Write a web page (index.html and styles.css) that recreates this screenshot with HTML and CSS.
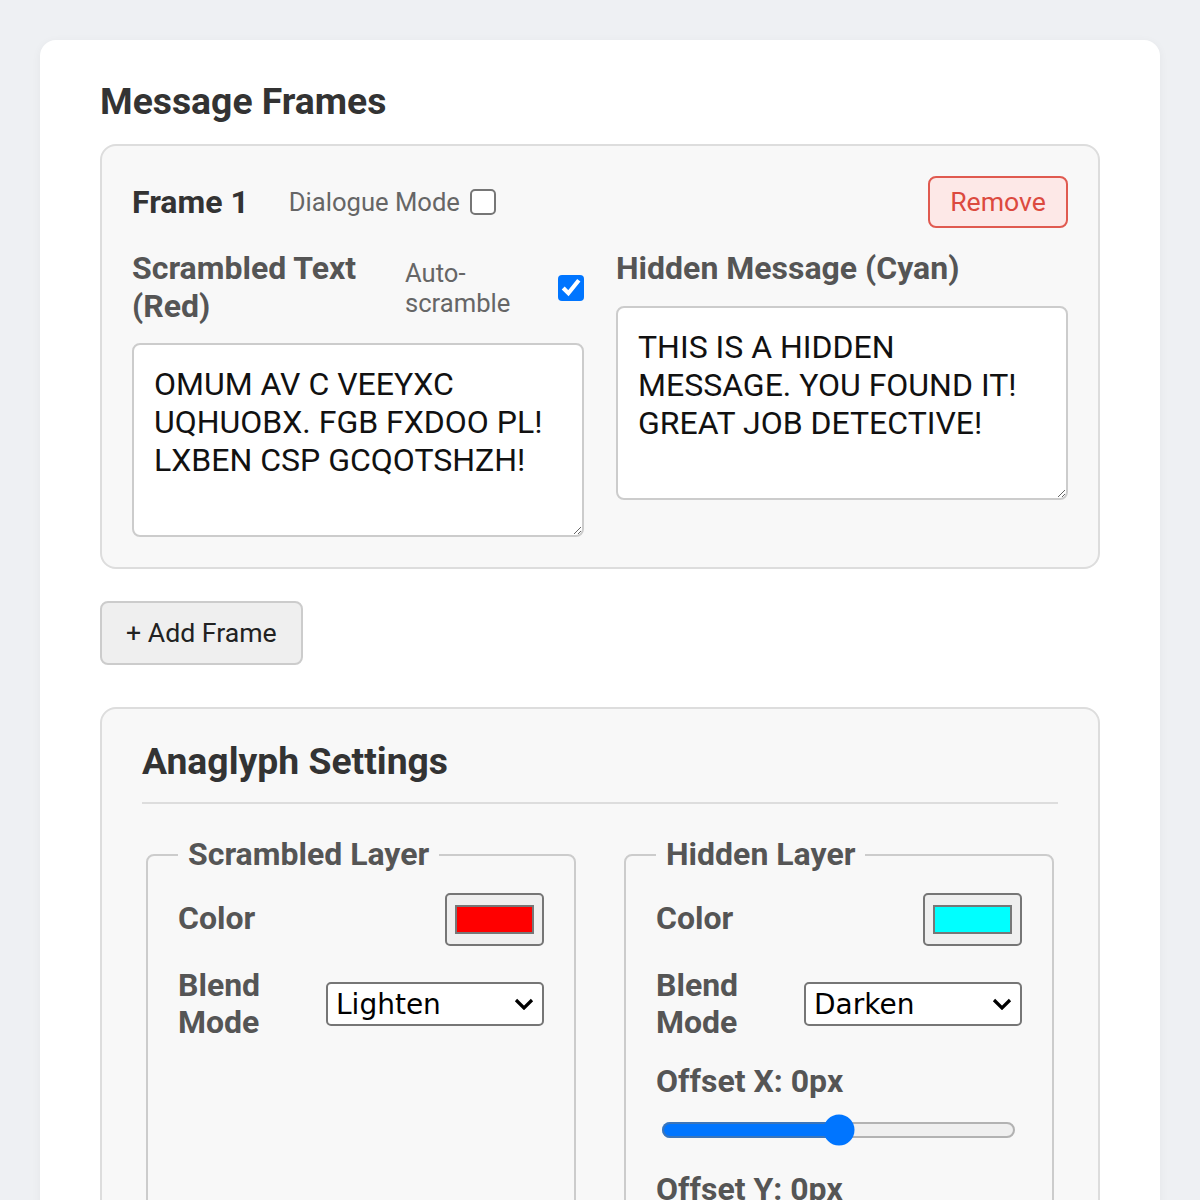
FILE: index.html
```html
<!DOCTYPE html>
<html lang="en">
<head>
<meta charset="utf-8">
<title>Message Frames</title>
<link rel="stylesheet" href="styles.css">
</head>
<body>
<div class="card">
  <h2 class="title">Message Frames</h2>
  <div class="frame">
    <div class="frame-head">
      <div class="frame-left">
        <h3 class="frame-name">Frame 1</h3>
        <label class="dialogue">Dialogue Mode <input type="checkbox" class="cb"></label>
      </div>
      <button class="remove">Remove</button>
    </div>
    <div class="cols">
      <div class="col">
        <div class="col-head">
          <label class="col-label">Scrambled Text (Red)</label>
          <label class="auto"><span class="auto-text">Auto-scramble</span><input type="checkbox" class="cb" checked></label>
        </div>
        <textarea class="msg">OMUM AV C VEEYXC UQHUOBX. FGB FXDOO PL! LXBEN CSP GCQOTSHZH!</textarea>
      </div>
      <div class="col">
        <div class="col-head">
          <label class="col-label wide">Hidden Message (Cyan)</label>
        </div>
        <textarea class="msg">THIS IS A HIDDEN MESSAGE. YOU FOUND IT! GREAT JOB DETECTIVE!</textarea>
      </div>
    </div>
  </div>
  <button class="add">+ Add Frame</button>
  <div class="settings">
    <h3 class="settings-title">Anaglyph Settings</h3>
    <div class="layers">
      <fieldset class="layer">
        <legend>Scrambled Layer</legend>
        <div class="layer-body">
          <div class="row"><label class="row-label">Color</label><input type="color" class="swatch" value="#ff0000"></div>
          <div class="row"><label class="row-label">Blend Mode</label><select class="blend"><option>Lighten</option><option>Darken</option><option>Multiply</option><option>Screen</option></select></div>
        </div>
      </fieldset>
      <fieldset class="layer">
        <legend>Hidden Layer</legend>
        <div class="layer-body">
          <div class="row"><label class="row-label">Color</label><input type="color" class="swatch" value="#00ffff"></div>
          <div class="row"><label class="row-label">Blend Mode</label><select class="blend"><option>Darken</option><option>Lighten</option><option>Multiply</option><option>Screen</option></select></div>
          <div class="offset">
            <label class="row-label">Offset X: 0px</label>
            <input type="range" class="range" min="-50" max="50" value="0">
          </div>
          <div class="offset">
            <label class="row-label">Offset Y: 0px</label>
            <input type="range" class="range" min="-50" max="50" value="0">
          </div>
        </div>
      </fieldset>
    </div>
  </div>
</div>
</body>
</html>
```
FILE: styles.css
```css
body {
  margin: 0;
  padding: 40px;
  background: #eef0f3;
  font-family: Roboto, "Liberation Sans", sans-serif;
}

.card {
  background: #ffffff;
  border-radius: 16px;
  padding: 39px 60px 60px;
  box-shadow: 0 2px 10px rgba(0, 0, 0, 0.05);
}

.title {
  margin: 0 0 21px;
  font-size: 37.3px;
  font-weight: 700;
  color: #333;
  line-height: normal;
}

.frame {
  background: #f8f8f8;
  border: 2px solid #dddddd;
  border-radius: 16px;
  padding: 30px;
}

.frame-head {
  display: flex;
  align-items: center;
  justify-content: space-between;
  margin-bottom: 22px;
}

.frame-left {
  display: flex;
  align-items: center;
  gap: 40px;
}

.frame-name {
  margin: 0;
  font-size: 32px;
  font-weight: 700;
  color: #333;
}

.dialogue {
  display: flex;
  align-items: center;
  gap: 10px;
  font-size: 25.6px;
  color: #666;
}

.cb {
  zoom: 2;
  margin: 0;
}

.remove {
  font-family: Roboto, sans-serif;
  font-size: 26.67px;
  line-height: 32px;
  color: #dc4a3f;
  background: #fde8e7;
  border: 2px solid #e05a50;
  border-radius: 8px;
  padding: 8px 20px;
}

.cols {
  display: grid;
  grid-template-columns: 1fr 1fr;
  gap: 32px;
  align-items: start;
}

.col-head {
  display: flex;
  align-items: center;
  justify-content: space-between;
  margin-bottom: 18px;
}

.col-label {
  width: 250px;
  font-size: 32px;
  font-weight: 700;
  color: #555;
  line-height: 37.5px;
}

.col-label.wide {
  width: auto;
}

.auto {
  display: flex;
  align-items: center;
  gap: 23px;
  font-size: 25.6px;
  line-height: 30px;
  color: #666;
}

.auto-text {
  width: 130px;
}

.msg {
  display: block;
  width: 100%;
  height: 194px;
  box-sizing: border-box;
  margin: 0;
  padding: 20px;
  border: 2px solid #cccccc;
  border-radius: 8px;
  background: #ffffff;
  font-family: Roboto, sans-serif;
  font-size: 32px;
  line-height: normal;
  color: #111;
}

.add {
  display: block;
  margin-top: 32px;
  font-family: Roboto, sans-serif;
  font-size: 26.67px;
  line-height: 32px;
  color: #222;
  background: #efefef;
  border: 2px solid #cccccc;
  border-radius: 8px;
  padding: 14px 24px;
}

.settings {
  margin-top: 42px;
  background: #f8f8f8;
  border: 2px solid #dddddd;
  border-radius: 16px;
  padding: 30px 40px 40px;
}

.settings-title {
  margin: 0;
  font-size: 37.3px;
  font-weight: 700;
  color: #333;
  line-height: normal;
  padding-bottom: 19px;
  border-bottom: 2px solid #dddddd;
}

.layers {
  display: grid;
  grid-template-columns: 1fr 1fr;
  gap: 40px;
  margin-top: 32px;
}

.layer {
  margin: 0 4px;
  min-width: 0;
  padding: 19px 30px 30px;
  border: 2px solid #cccccc;
  border-radius: 8px;
}

.layer legend {
  padding: 0 10px;
  font-size: 32px;
  font-weight: 700;
  color: #555;
  line-height: 37.5px;
}

.layer-body {
  display: flex;
  flex-direction: column;
  gap: 21px;
}

.row {
  display: flex;
  align-items: center;
  justify-content: space-between;
  gap: 16px;
}

.row-label {
  flex: 1;
  display: block;
  font-size: 32px;
  font-weight: 700;
  color: #555;
  line-height: 37.5px;
}

.swatch {
  zoom: 2;
  width: 49.5px;
  height: 26.5px;
  margin: 0;
  flex: none;
}

.blend {
  appearance: none;
  -webkit-appearance: none;
  flex: none;
  box-sizing: border-box;
  width: 218px;
  height: 44px;
  margin: 0;
  padding: 0 40px 0 8px;
  border: 2px solid #767676;
  border-radius: 5px;
  font-family: "DejaVu Sans", sans-serif;
  font-size: 28px;
  color: #000;
  background-color: #fff;
  background-image: url("data:image/svg+xml,%3Csvg xmlns='http://www.w3.org/2000/svg' width='20' height='12' viewBox='0 0 20 12'%3E%3Cpath d='M2 2 L10 10 L18 2' fill='none' stroke='%23000' stroke-width='3.2'/%3E%3C/svg%3E");
  background-repeat: no-repeat;
  background-position: right 8px center;
  background-size: 20px 12px;
}

.range {
  zoom: 2;
  display: block;
  width: 177.5px;
  margin: 7px 2px 2px 2.5px;
}
```
